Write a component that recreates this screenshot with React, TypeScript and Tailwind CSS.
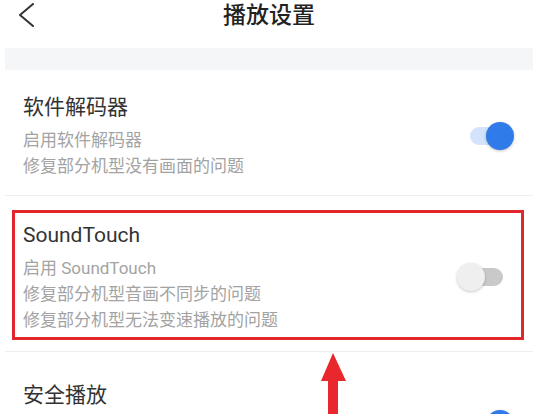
import React from 'react';

type Row = {
  title: string;
  lines: string[];
  on: boolean;
  pt: string;
};

const rows: Row[] = [
  {
    title: '软件解码器',
    lines: ['启用软件解码器', '修复部分机型没有画面的问题'],
    on: true,
    pt: 'pt-[23px] pb-[16px]',
  },
  {
    title: 'SoundTouch',
    lines: ['启用 SoundTouch', '修复部分机型音画不同步的问题', '修复部分机型无法变速播放的问题'],
    on: false,
    pt: 'pt-[25px] pb-[18px]',
  },
  {
    title: '安全播放',
    lines: ['启用安全播放', '修复部分机型播放闪退的问题'],
    on: true,
    pt: 'pt-[29px] pb-[16px]',
  },
];

function Toggle({ on }: { on: boolean }) {
  return (
    <div className="relative h-[28px] w-[57px] shrink-0">
      <div
        className={
          on
            ? 'absolute left-[13px] top-[5px] h-[18px] w-[36px] rounded-full bg-[#d3e3fb]'
            : 'absolute left-[8px] top-[5px] h-[18px] w-[38px] rounded-full bg-[#c9c9c9]'
        }
      />
      <div
        className={
          on
            ? 'absolute right-0 top-0 h-[28px] w-[28px] rounded-full bg-[#2f7bea] shadow-[0_1px_3px_rgba(0,0,0,0.25)]'
            : 'absolute left-0 top-0 h-[28px] w-[28px] rounded-full bg-[#efefef] shadow-[0_1px_3px_rgba(0,0,0,0.22)]'
        }
      />
    </div>
  );
}

export default function App() {
  return (
    <div
      className="relative h-[414px] w-[555px] overflow-hidden bg-white text-[#333]"
      style={{ fontFamily: 'Roboto, "Noto Sans CJK SC", sans-serif' }}
    >
      <div className="ml-[5px] w-[528px]">
        <div className="grid h-[48px] grid-cols-[1fr_auto_1fr] items-start">
          <div className="pl-[13px] pt-[3px]">
            <svg width="18" height="24" viewBox="0 0 18 24" fill="none">
              <polyline
                points="15,1 2,12 15,23"
                stroke="#333"
                strokeWidth="2"
                strokeLinecap="round"
                strokeLinejoin="round"
              />
            </svg>
          </div>
          <div className="text-[23px] font-medium leading-[32px] text-[#222]">播放设置</div>
          <div />
        </div>
        <div className="h-[22px] bg-[#f5f6f8]" />

        {rows.map((row) => (
          <div
            key={row.title}
            className={`flex items-center border-b border-[#efefef] pl-[18px] pr-[19px] ${row.pt}`}
          >
            <div className="flex-1">
              <div className="text-[21px] leading-[28px]">{row.title}</div>
              <div className="mt-[6px] text-[17px] leading-[26px] text-[#a3a3a3]">
                {row.lines.map((l) => (
                  <div key={l}>{l}</div>
                ))}
              </div>
            </div>
            <Toggle on={row.on} />
          </div>
        ))}
      </div>

      {/* annotation box */}
      <div className="absolute left-[12px] top-[210px] h-[130px] w-[512px] border-[3px] border-[#e2262b]" />

      {/* annotation arrow */}
      <svg className="absolute left-[318px] top-[351px]" width="32" height="63" viewBox="0 0 32 63">
        <polygon points="15,2 3,30 28,30" fill="#e8282c" />
        <rect x="10" y="28" width="10" height="40" fill="#e8282c" />
      </svg>
    </div>
  );
}
